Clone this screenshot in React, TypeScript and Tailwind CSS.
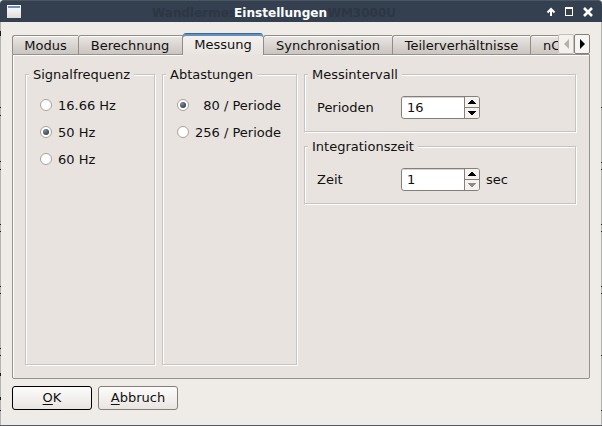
import type { ReactNode } from "react";

const tabs = [
  { label: "Modus", size: "w-[66px]" },
  { label: "Berechnung", size: "w-[105px] border-r pr-px" },
  { label: "Messung", size: "w-[80px]", active: true },
  { label: "Synchronisation", size: "w-[129px]" },
  { label: "Teilerverhältnisse", size: "w-[138px]" },
];

// Row rules of the window behind, visible along the dialog's edges
const leftMarks = [
  [31, 5],
  [107, 1],
  [115, 1],
  [161, 1],
  [169, 1],
  [224, 1],
  [231, 1],
  [286, 1],
  [293, 1],
  [348, 1],
  [355, 1],
  [373, 3],
  [397, 3],
  [410, 1],
];
const rightMarks = [
  [107, 1],
  [162, 1],
  [169, 1],
  [224, 1],
  [231, 1],
  [286, 1],
  [293, 1],
  [355, 1],
  [410, 1],
];

function Group({ title, className, children }: { title: string; className: string; children: ReactNode }) {
  return (
    <section
      className={`border border-[#c6c3c1] shadow-[1px_1px_0_#fff,inset_1px_1px_0_#fff] ${className}`}
    >
      <h2 className="-mt-2 ml-[3px] h-4 w-fit bg-[#e8e3df] px-1 leading-4">{title}</h2>
      {children}
    </section>
  );
}

function Radio({ label, checked }: { label: string; checked?: boolean }) {
  return (
    <label className="flex h-[27px] items-center whitespace-pre">
      <span className="mb-px mr-1.5 flex size-3 shrink-0 items-center justify-center rounded-full border border-[#aaa197] bg-white">
        {checked && <span className="size-1.5 rounded-full bg-radial-[at_35%_30%] from-[#7f8f9c] to-[#1b2833]" />}
      </span>
      {label}
    </label>
  );
}

function Arrow({ down, off }: { down?: boolean; off?: boolean }) {
  return (
    <svg width="8" height="4" viewBox="0 0 8 4" fill={off ? "#8e8a86" : "#000"} shapeRendering="crispEdges">
      <path d={down ? "M0 0H8V1H7V2H6V3H5V4H3V3H2V2H1V1H0Z" : "M0 4H8V3H7V2H6V1H5V0H3V1H2V2H1V3H0Z"} />
    </svg>
  );
}

function Spin({ label, value, unit, atMin }: { label: string; value: string; unit?: string; atMin?: boolean }) {
  return (
    <div className="mt-[13px] flex h-[23px] items-center pl-3">
      <span className="w-[84px]">{label}</span>
      <div className="flex h-[23px] w-[79px] overflow-hidden rounded-[3px] border border-[#857f79] bg-white">
        <span className="w-[62px] pl-[5px] leading-[21px] shadow-[inset_0_1px_0_#d5d3d1]">{value}</span>
        <div className="flex w-[15px] flex-col border-l border-[#857f79] bg-[#f4f1ee]">
          <span className="flex h-[10px] items-center justify-center">
            <Arrow />
          </span>
          <span className="flex h-[11px] items-center justify-center border-t border-[#857f79]">
            <Arrow down off={atMin} />
          </span>
        </div>
      </div>
      <span className="ml-1.5">{unit}</span>
    </div>
  );
}

export default function App() {
  return (
    <div className="relative h-[426px] w-[602px] overflow-hidden border-b border-[#505b69] bg-[#efebe7] font-['DejaVu_Sans',sans-serif] text-[13px] text-[#111]">
      <header className="relative flex h-[22px] items-center rounded-t-[4px] border-t border-[#4b5663] bg-[#344050] pl-[7px] pr-[9px]">
        <svg width="14" height="13" viewBox="0 0 14 13">
          <defs>
            <linearGradient id="win" x2="0" y2="1">
              <stop stopColor="#fff" />
              <stop offset="1" stopColor="#dcdedb" />
            </linearGradient>
          </defs>
          <path fill="url(#win)" d="M0 0H14V13H0Z" />
          <path fill="#6b8fc4" d="M1 1H13V3H1Z" />
        </svg>
        <div className="absolute left-[152px] top-[3px] flex w-[244px] justify-between text-[12px] font-bold leading-[18px] text-[#2c3644]">
          <span>Wandlermes</span>
          <span>WM3000U</span>
        </div>
        <h1 className="absolute left-[234px] top-[3px] text-[12.1px] font-bold leading-[18px] text-white">Einstellungen</h1>
        <div className="ml-auto flex items-center gap-[9px]">
          <svg width="10" height="10" viewBox="0 0 10 10" fill="none" stroke="#fff" strokeWidth="2">
            <path d="M5 9V2M1.5 5.5L5 2L8.5 5.5" />
          </svg>
          <svg width="9" height="9" viewBox="0 0 9 9" fill="none" stroke="#fff" shapeRendering="crispEdges">
            <path d="M.5 .5H7.5V8.5H.5ZM0 1.5H8" />
          </svg>
          <svg width="10" height="10" viewBox="0 0 10 10" fill="none" stroke="#fff" strokeWidth="2.6">
            <path d="M1 1L9 9M9 1L1 9" />
          </svg>
        </div>
      </header>
      <div className="flex h-[403px] flex-col border-l border-r border-[#b5b3b1] pl-[11px] pr-[11px]">
        <nav className="mt-[11px] flex h-[21px] w-[578px] items-end">
          {tabs.map((t) =>
            t.active ? (
              <div
                key={t.label}
                className={`relative -mb-0.5 flex h-[23px] ${t.size} justify-center rounded-t-[3px] border-t border-[#3d6795] bg-linear-to-b from-[#f5f3f0] to-[#e8e3df] leading-[22px] shadow-[inset_0_2px_0_#6390bd]`}
              >
                {t.label}
              </div>
            ) : (
              <div
                key={t.label}
                className={`flex h-[19px] ${t.size} justify-center rounded-tl-[3px] border-l border-t border-[#918c86] bg-linear-to-b from-[#e9e6e3] to-[#cbc5c0] leading-[19px] shadow-[inset_0_1px_0_#fff]`}
              >
                {t.label}
              </div>
            ),
          )}
          <div className="h-[19px] w-[28px] overflow-hidden rounded-tl-[3px] border-l border-t border-[#918c86] bg-linear-to-b from-[#e9e6e3] to-[#cbc5c0] pl-3 leading-[19px] shadow-[inset_0_1px_0_#fff]">
            nC
          </div>
          <span className="flex h-5 w-4 items-center justify-center rounded-[2px] border border-[#c5bfba] bg-[#f3f0ed]">
            <svg width="5" height="10" viewBox="0 0 5 10" fill="#b4b0ac">
              <path d="M5 0V10L0 5Z" />
            </svg>
          </span>
          <span className="flex h-5 w-4 items-center justify-center rounded-[2px] border border-[#857f79] bg-[#f7f5f3]">
            <svg width="5" height="10" viewBox="0 0 5 10">
              <path d="M0 0V10L5 5Z" />
            </svg>
          </span>
        </nav>
        <main className="flex h-[325px] w-[578px] gap-[7px] rounded-b-[2px] border border-[#96918b] bg-[#e8e3df] pl-3 pt-[19px] shadow-[inset_1px_1px_0_#fff]">
          <Group title="Signalfrequenz" className="h-[291px] w-[130px]">
            <div className="pl-[14px] pt-[9px]">
              <Radio label="16.66 Hz" />
              <Radio label="50 Hz" checked />
              <Radio label="60 Hz" />
            </div>
          </Group>
          <Group title="Abtastungen" className="h-[291px] w-[135px]">
            <div className="pl-[14px] pt-[9px]">
              <Radio label="  80 / Periode" checked />
              <Radio label="256 / Periode" />
            </div>
          </Group>
          <div className="flex flex-col gap-[14px]">
            <Group title="Messintervall" className="h-[58px] w-[272px]">
              <Spin label="Perioden" value="16" />
            </Group>
            <Group title="Integrationszeit" className="h-[58px] w-[272px]">
              <Spin label="Zeit" value="1" unit="sec" atMin />
            </Group>
          </div>
        </main>
        <footer className="mt-[7px] flex gap-1.5">
          <button className="h-6 w-20 rounded-[3px] border border-black bg-linear-to-b from-[#fdfcfb] to-[#e9e5e1] leading-[22px]">
            <span className="underline underline-offset-2">O</span>K
          </button>
          <button className="h-6 w-20 rounded-[3px] border border-[#857f79] bg-linear-to-b from-[#fdfcfb] to-[#e9e5e1] leading-[22px]">
            <span className="underline underline-offset-2">A</span>bbruch
          </button>
        </footer>
      </div>
      {leftMarks.map(([top, height]) => (
        <i key={top} className="absolute left-0 w-px bg-[#1c1c1c]" style={{ top, height }} />
      ))}
      {rightMarks.map(([top, height]) => (
        <i key={top} className="absolute right-0 w-px bg-[#1c1c1c]" style={{ top, height }} />
      ))}
    </div>
  );
}
